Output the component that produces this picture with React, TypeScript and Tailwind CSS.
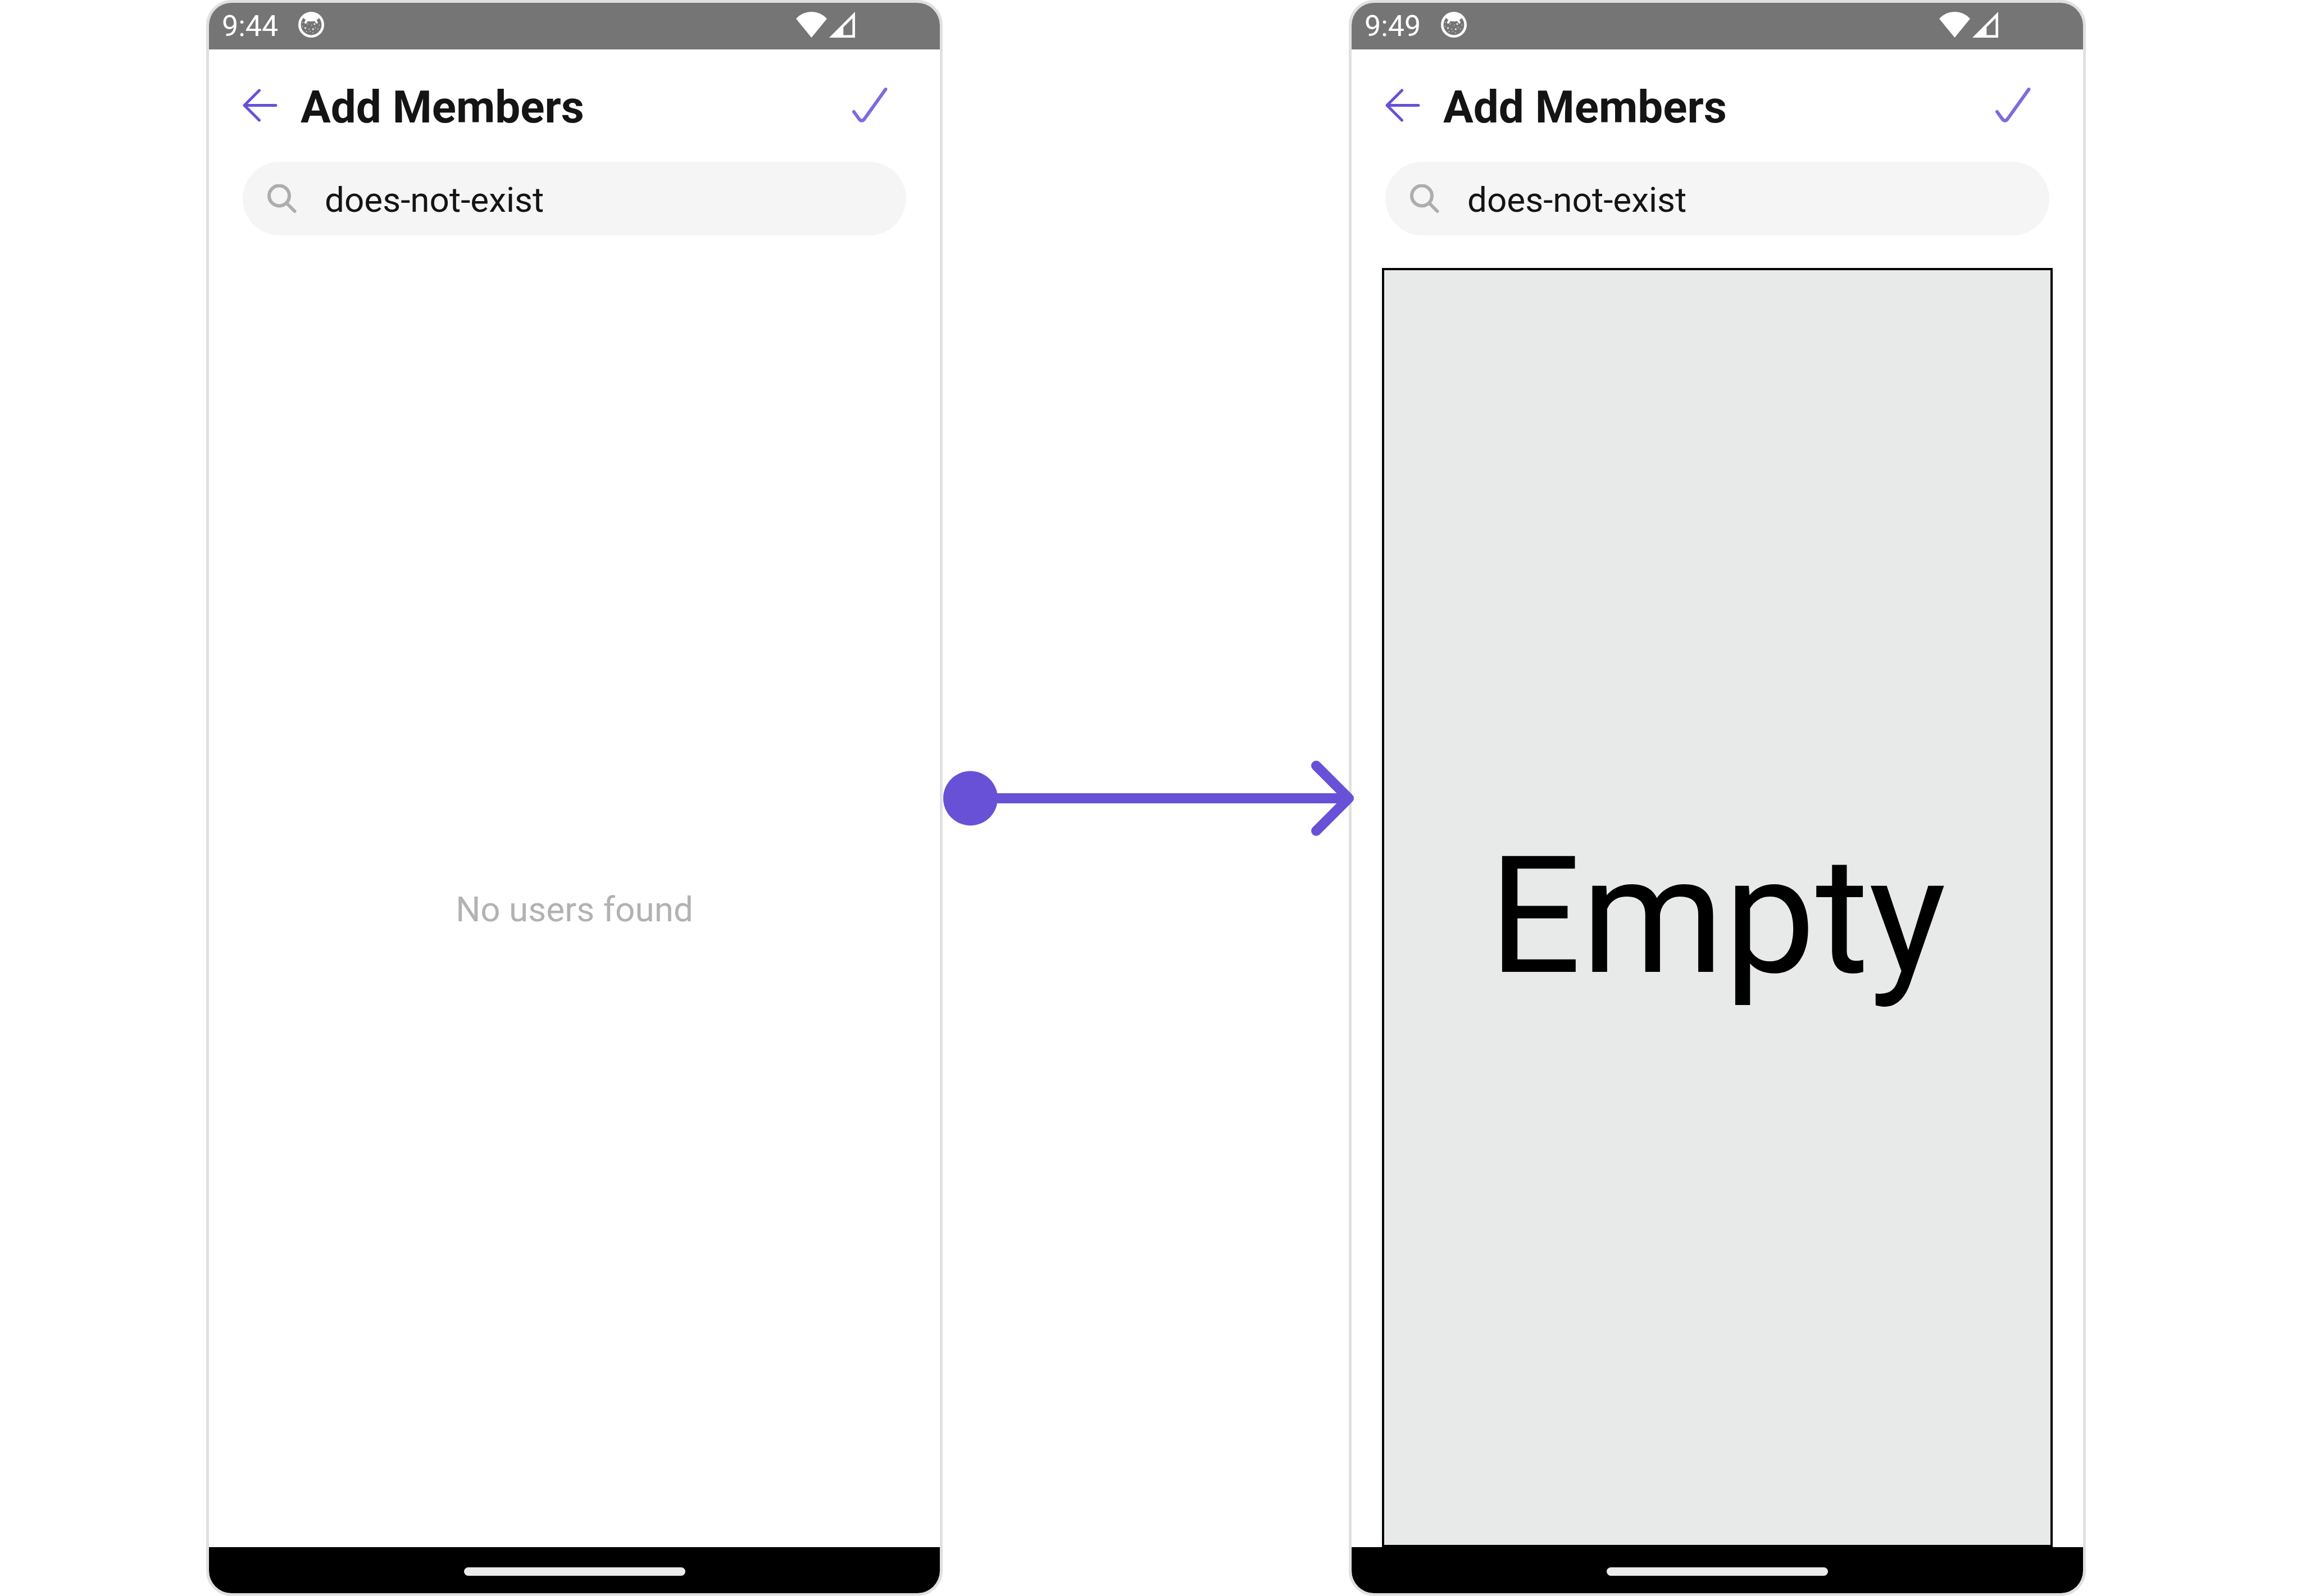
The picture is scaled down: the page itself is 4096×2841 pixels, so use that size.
import React from "react";

function FaceIcon() {
  return (
    <svg className="h-[46px] w-[46px]" viewBox="0 0 50 50" aria-hidden="true">
      <circle cx="25" cy="25" r="22.5" fill="none" stroke="#fff" strokeWidth="5" />
      <path d="M6 12 L10.5 12 Q12 15 14.5 15.5 L12.2 19.6 A2 2 0 0 0 15.8 22 L18.5 17.8 Q25 19.6 31.5 17.8 L34 21.6 A2 2 0 0 0 37.6 19.8 L35.5 15.8 Q38.5 14.5 40 12 L44 12 L36 3 L14 3 Z" fill="#fff" />
      <g fill="#fff">
        <rect x="7.5" y="20" width="1.4" height="1.4" />
        <rect x="7.5" y="27.5" width="1.4" height="1.4" />
        <rect x="12.2" y="30" width="2.8" height="2.8" />
        <rect x="17.4" y="22.8" width="1.4" height="1.4" />
        <rect x="20" y="32.5" width="1.6" height="1.6" />
        <rect x="15" y="37.4" width="1.5" height="1.5" />
        <rect x="22.5" y="37.4" width="1.4" height="1.4" />
        <rect x="25" y="25" width="1.4" height="1.4" />
        <rect x="27.2" y="32.2" width="2.8" height="2.8" />
        <rect x="30" y="22.3" width="2.8" height="2.8" />
        <rect x="32.5" y="30" width="1.4" height="1.4" />
        <rect x="37.4" y="32.4" width="1.5" height="1.5" />
        <rect x="40" y="25" width="1.4" height="1.4" />
        <rect x="27.4" y="40" width="1.4" height="1.4" />
      </g>
    </svg>
  );
}

function StatusBar({ time }: { time: string }) {
  return (
    <div className="flex h-[83px] shrink-0 items-center bg-[#757575] pl-[23px] pr-[151px] text-white">
      <span className="text-[52px] leading-[60px]">{time}</span>
      <div className="ml-[36px] flex flex-1 items-center pb-[5px]">
        <FaceIcon />
        <svg className="ml-auto h-[46px] w-[55px]" viewBox="0 0 60 50" aria-hidden="true">
          <path d="M30 50 L0 13.3 Q12.5 0 30 0 Q47.5 0 60 13.3 Z" fill="#fff" />
        </svg>
        <svg className="ml-[4px] h-[46px] w-[46px]" viewBox="0 0 50 50" aria-hidden="true">
          <path fillRule="evenodd" d="M50 0 V50 H0 Z M45 12.5 L27.5 30 V45 H45 Z" fill="#fff" />
        </svg>
      </div>
    </div>
  );
}

function Phone({ time, id, children }: { time: string; id: string; children: React.ReactNode }) {
  return (
    <section className="flex min-w-0 flex-col overflow-hidden rounded-[45px] border-[5px] border-[#e0e0e0] bg-white">
      <StatusBar time={time} />
      <header className="flex h-[200px] shrink-0 items-center px-[60px]">
        <button type="button" aria-label="Back" className="h-[60px] w-[62px]">
          <svg className="h-full w-full" viewBox="0 0 62 60" fill="none" stroke="#6851d6" strokeWidth="5" strokeLinecap="round" strokeLinejoin="round" aria-hidden="true">
            <path d="M59 29.5 H3 M29.5 3 L3 29.5 L29.5 56" />
          </svg>
        </button>
        <h1 className="ml-[41px] pt-[6px] text-[80px] font-bold leading-[94px] text-[#141414]">Add Members</h1>
        <button type="button" aria-label="Confirm" className="ml-auto mr-[33px] h-[64px] w-[64px]">
          <svg className="h-full w-full" viewBox="0 0 64 64" fill="none" stroke="#6851d6" strokeOpacity="0.85" strokeWidth="6" strokeLinecap="round" strokeLinejoin="round" aria-hidden="true">
            <path d="M4 43 L13.5 56 Q18 61.5 22.5 56 L60.5 3" />
          </svg>
        </button>
      </header>
      <label htmlFor={id} className="mx-[60px] flex h-[131px] shrink-0 items-center rounded-full bg-[#f5f5f5] px-[44px]">
        <svg className="h-[52px] w-[52px] shrink-0" viewBox="0 0 52 52" fill="none" stroke="#adadad" strokeWidth="6" strokeLinecap="round" aria-hidden="true">
          <circle cx="21" cy="20.5" r="18" />
          <path d="M35 34.5 L48.5 48" />
        </svg>
        <input id={id} type="text" aria-label="Search users" defaultValue="does-not-exist" className="ml-[50px] min-w-0 flex-1 bg-transparent pt-[4px] text-[62px] leading-[74px] text-[#141414] outline-none" />
      </label>
      <main className="flex min-h-0 flex-1 flex-col">{children}</main>
      <footer className="flex h-[82px] shrink-0 items-center justify-center bg-black pt-[4px]">
        <div className="h-[15px] w-[394px] rounded-full bg-[#ebebeb]" />
      </footer>
    </section>
  );
}

export default function App() {
  return (
    <div className="grid h-screen grid-cols-[367fr_1311fr_723fr_1312fr_383fr] bg-white font-['Roboto',sans-serif]">
      <div />
      <Phone time="9:44" id="search-before">
        <div className="flex flex-1 items-center justify-center pt-[64px]">
          <p className="text-[62px] leading-[74px] text-[#b2b2b2]">No users found</p>
        </div>
      </Phone>
      <div className="relative z-10 mr-[-10px] flex items-center">
        <svg className="w-full" viewBox="0 0 733 136" fill="none" stroke="#6851d6" strokeWidth="18" strokeLinecap="round" strokeLinejoin="round" role="img" aria-label="Becomes">
          <circle cx="49.5" cy="68" r="48.5" fill="#6851d6" stroke="none" />
          <path d="M49 68 H722 M665 10 L723 68 L665 126" />
        </svg>
      </div>
      <Phone time="9:49" id="search-after">
        <div className="mx-[54px] mt-[58px] flex flex-1 items-center justify-center border-4 border-black bg-[#e8eae9] pt-[30px]">
          <p className="text-[290px] leading-[340px] text-black">Empty</p>
        </div>
      </Phone>
      <div />
    </div>
  );
}
